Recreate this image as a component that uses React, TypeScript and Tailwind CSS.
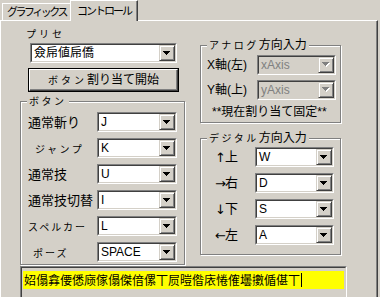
import type { ReactNode } from "react";

const face = "font-['Liberation_Sans','Noto_Sans_CJK_JP',sans-serif]";

function Arrow({ disabled }: { disabled?: boolean }) {
  return (
    <svg width="8" height="5" viewBox="0 0 8 5" shapeRendering="crispEdges">
      {disabled && <polygon points="1,1 8,1 4.5,5" fill="#ffffff" />}
      <polygon points="0,0 7,0 3.5,4" fill={disabled ? "#808080" : "#000000"} />
    </svg>
  );
}

function Combo({ value, className, disabled }: { value: string; className?: string; disabled?: boolean }) {
  return (
    <div
      className={`flex h-[20px] shrink-0 border border-t-[#808080] border-l-[#808080] border-b-white border-r-white ${className ?? ""}`}
    >
      <div
        className={`flex flex-1 border border-t-[#404040] border-l-[#404040] border-b-[#d4d0c8] border-r-[#d4d0c8] ${disabled ? "bg-[#d4d0c8]" : "bg-white"}`}
      >
        <span
          className={`flex flex-1 items-center pl-[2px] text-[12px] leading-none ${disabled ? "text-[#808080]" : "text-black"}`}
        >
          {value}
        </span>
        <div className="flex w-[16px] items-center justify-center border border-t-[#d4d0c8] border-l-[#d4d0c8] border-b-[#404040] border-r-[#404040] bg-[#d4d0c8] shadow-[inset_1px_1px_0_#fff,inset_-1px_-1px_0_#808080]">
          <Arrow disabled={disabled} />
        </div>
      </div>
    </div>
  );
}

function Group({ title, className, children }: { title: ReactNode; className?: string; children: ReactNode }) {
  return (
    <div
      className={`relative border border-[#808080] shadow-[inset_1px_1px_0_#fff,1px_1px_0_#fff] ${className ?? ""}`}
    >
      <div className="absolute -top-[7px] left-[6px] bg-[#d4d0c8] px-[2px] text-[12px] leading-[13px] whitespace-nowrap">
        {title}
      </div>
      {children}
    </div>
  );
}

// small, loosely spaced katakana as the old UI font draws them
function Kana({ children, className }: { children: ReactNode; className?: string }) {
  return <span className={`text-[10px] tracking-[1.5px] ${className ?? ""}`}>{children}</span>;
}

const buttonRows: { label: ReactNode; value: string; pad?: string }[] = [
  { label: <span className="text-[13px]">通常斬り</span>, value: "J" },
  { label: <Kana className="tracking-[2.5px]">ジャンプ</Kana>, value: "K", pad: "pl-[7px]" },
  { label: <span className="text-[13px]">通常技</span>, value: "U" },
  { label: <span className="text-[13px]">通常技切替</span>, value: "I" },
  { label: <Kana className="tracking-[2px]">スペルカー</Kana>, value: "L" },
  { label: <Kana className="tracking-[2px]">ポーズ</Kana>, value: "SPACE", pad: "pl-[5px]" },
];

const digitalRows = [
  { arrow: "↑", dir: "上", value: "W" },
  { arrow: "→", dir: "右", value: "D" },
  { arrow: "↓", dir: "下", value: "S" },
  { arrow: "←", dir: "左", value: "A" },
];

export default function App() {
  return (
    <div className={`h-[297px] w-[380px] overflow-hidden bg-[#d4d0c8] text-black ${face}`}>
      {/* tabs */}
      <div className="flex h-[20px] items-end pl-[2px]">
        <div className="flex h-[17px] w-[68px] items-center justify-center border-t border-l border-white text-[11px] tracking-[-2.5px]">
          グラフィックス
        </div>
        <div className="relative z-10 -mb-px flex h-[21px] w-[68px] items-center justify-center border-t border-l border-r border-t-white border-l-white border-r-[#404040] bg-[#d4d0c8] text-[11px] tracking-[-2px] shadow-[inset_-1px_0_0_#808080]">
          コントロール
        </div>
      </div>

      {/* tab page */}
      <div className="h-[280px] w-[378px] border-t border-l border-r border-t-white border-l-white border-r-[#404040] pl-[19px] shadow-[inset_-1px_0_0_#808080]">
        <div className="flex">
          {/* left column */}
          <div className="flex w-[165px] flex-col">
            <div className="mt-[6px] ml-[6px] h-[12px] leading-[12px]">
              <Kana className="tracking-[3px]">プリセ</Kana>
            </div>
            <Combo value="僉帍値帍僑" className="mt-[4px] ml-[10px] w-[147px]" />
            <div className="mt-[5px] ml-[8px] h-[24px] w-[151px] border border-black">
              <div className="flex h-full items-center justify-center border border-t-white border-l-white border-b-[#404040] border-r-[#404040] shadow-[inset_-1px_-1px_0_#808080] text-[12px]">
                <Kana className="tracking-[3px]">ボタン</Kana>
                <span>割り当て開始</span>
              </div>
            </div>
            <Group
              title={<Kana className="tracking-[2.5px]">ボタン</Kana>}
              className="mt-[9px] h-[164px]"
            >
              <div className="flex flex-col gap-[6px] pt-[10px] pl-[7px]">
                {buttonRows.map((r) => (
                  <div key={r.value} className="flex h-[20px] items-center">
                    <div className={`w-[69px] whitespace-nowrap ${r.pad ?? ""}`}>{r.label}</div>
                    <Combo value={r.value} className="w-[80px]" />
                  </div>
                ))}
              </div>
            </Group>
          </div>

          {/* right column */}
          <div className="ml-[15px] flex w-[141px] flex-col">
            <Group
              title={
                <>
                  <Kana className="tracking-[2.5px]">アナログ</Kana>
                  <span>方向入力</span>
                </>
              }
              className="mt-[24px] h-[78px]"
            >
              <div className="flex flex-col gap-[6px] pt-[9px] pl-[6px]">
                <div className="flex h-[19px] items-center">
                  <span className="w-[50px] text-[12px]">X軸(左)</span>
                  <Combo value="xAxis" disabled className="h-[19px] w-[79px]" />
                </div>
                <div className="flex h-[19px] items-center">
                  <span className="w-[50px] text-[12px]">Y軸(上)</span>
                  <Combo value="yAxis" disabled className="h-[19px] w-[79px]" />
                </div>
              </div>
              <div className="mt-[6px] pl-[11px] text-[12px] leading-[14px]">**現在割り当て固定**</div>
            </Group>
            <Group
              title={
                <>
                  <Kana className="tracking-[2.5px]">デジタル</Kana>
                  <span>方向入力</span>
                </>
              }
              className="mt-[15px] h-[117px]"
            >
              <div className="flex flex-col gap-[6px] pt-[8px] pl-[14px]">
                {digitalRows.map((r) => (
                  <div key={r.value} className="flex h-[20px] items-center">
                    <span className="flex w-[40px] items-center text-[13px]">
                      <span className="w-[10px] font-['DejaVu_Sans',sans-serif] text-[13px] leading-none tracking-[-2px]">
                        {r.arrow}
                      </span>
                      {r.dir}
                    </span>
                    <Combo value={r.value} className="w-[79px]" />
                  </div>
                ))}
              </div>
            </Group>
          </div>
        </div>

        {/* message box */}
        <div className="mt-[1px] h-[40px] w-[327px] border border-t-[#808080] border-l-[#808080] border-b-white border-r-white">
          <div className="h-full border border-t-[#404040] border-l-[#404040] border-b-[#d4d0c8] border-r-[#d4d0c8] px-[1px] pt-[3px]">
            <div className="flex h-[18px] items-center bg-[#ffff00] pl-[1px] font-['Noto_Sans_CJK_SC',sans-serif] text-[12px] leading-none whitespace-nowrap">
              妱傝搻偠僁庼傢傝傑偣傫丅屃暟偺庡惓傕壜擻偱偡丅
              <span className="ml-px h-[14px] w-px bg-black" />
            </div>
          </div>
        </div>
      </div>
    </div>
  );
}
